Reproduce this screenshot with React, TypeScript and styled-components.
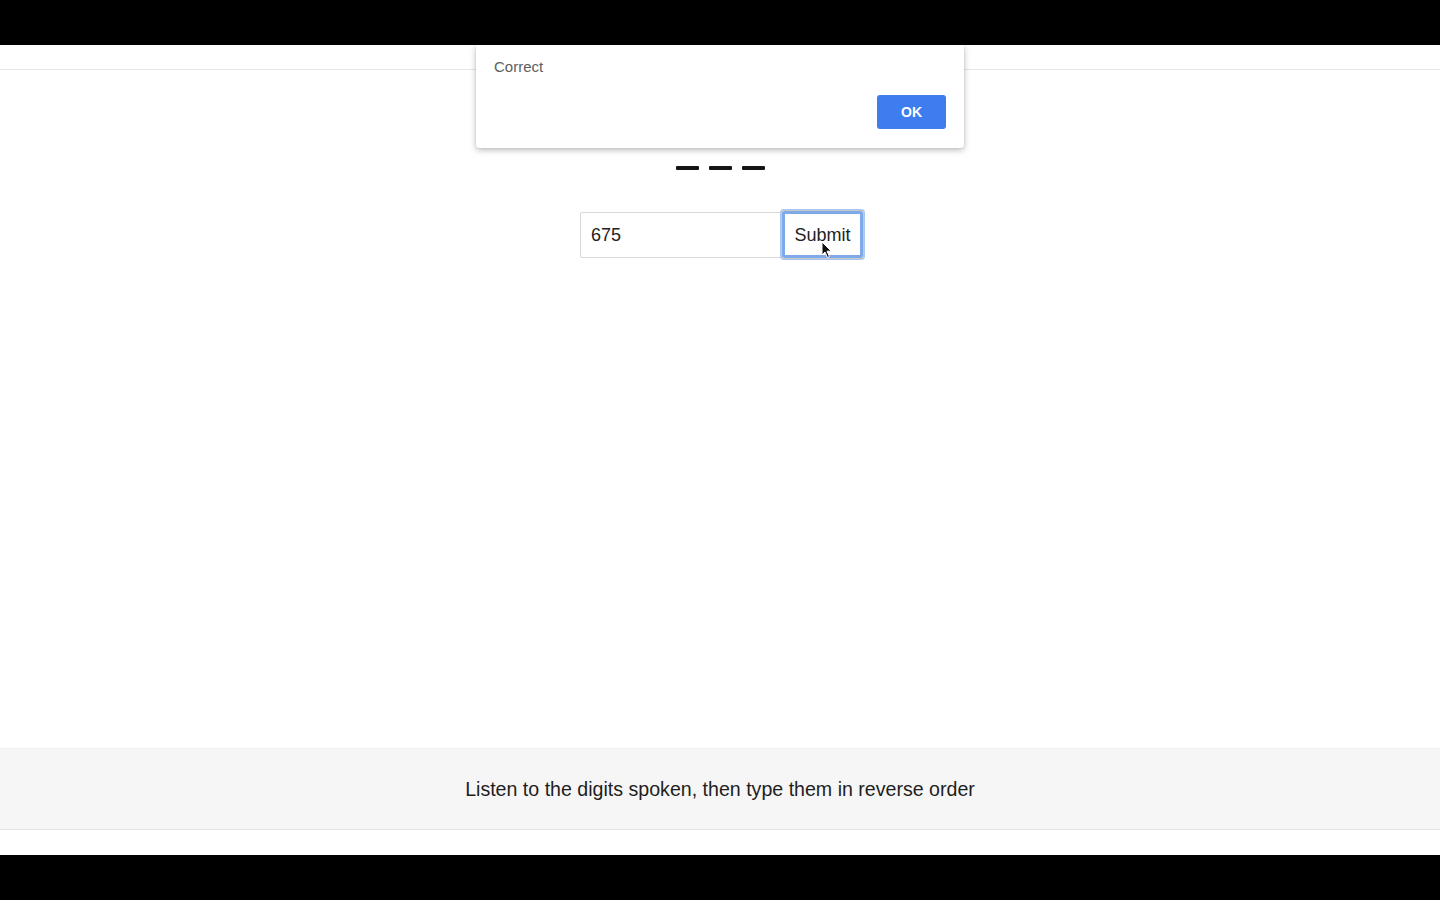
import React from "react";
import styled, { createGlobalStyle } from "styled-components";

const Global = createGlobalStyle`
  html, body { margin: 0; padding: 0; background: #000; }
  body { font-family: "Liberation Sans", Arial, sans-serif; }
  * { box-sizing: border-box; }
`;

const Frame = styled.div`
  width: 1440px;
  height: 900px;
  display: flex;
  flex-direction: column;
  background: #000;
  overflow: hidden;
`;

const Letterbox = styled.div`
  height: 45px;
  flex: none;
  background: #000;
`;

const Page = styled.div`
  position: relative;
  flex: 1;
  display: flex;
  flex-direction: column;
  background: #fff;
`;

const HeaderBar = styled.div`
  height: 25px;
  flex: none;
  border-bottom: 1px solid #e6e6e6;
`;

const Main = styled.main`
  flex: 1;
  display: flex;
  flex-direction: column;
  align-items: center;
  padding-top: 96px;
`;

const Blanks = styled.div`
  display: flex;
  gap: 10px;
  margin-left: 1px;
`;

const Blank = styled.span`
  width: 23px;
  height: 4px;
  border-radius: 1px;
  background: #151515;
`;

const Form = styled.form`
  display: flex;
  align-items: center;
  margin-top: 40px;
  margin-left: 4px;
`;

const Input = styled.input`
  width: 201px;
  height: 46px;
  border: 1px solid #d9d9d9;
  border-radius: 2px 0 0 2px;
  padding: 2px 10px 0;
  font-family: "Liberation Sans", Arial, sans-serif;
  font-size: 18px;
  color: #222;
  outline: none;
  background: #fff;
`;

const SubmitWrap = styled.div`
  position: relative;
`;

const SubmitButton = styled.button`
  width: 83px;
  height: 49px;
  border: 1px solid #c8c8c8;
  border-radius: 3px;
  background: #fff;
  font-family: "Liberation Sans", Arial, sans-serif;
  font-size: 18px;
  color: #222;
  padding: 2px 0 0;
  box-shadow: 0 0 0 3px #7eaaea inset, 0 0 0 1px #a9c6f2;
  outline: none;
`;

const Cursor = styled.svg`
  position: absolute;
  left: 40px;
  top: 31px;
  pointer-events: none;
`;

const Footer = styled.footer`
  height: 82px;
  flex: none;
  margin-bottom: 25px;
  background: #f6f6f6;
  border-top: 1px solid #efefef;
  border-bottom: 1px solid #e3e3e3;
  display: flex;
  align-items: center;
  justify-content: center;
  font-size: 19.6px;
  color: #1e1e1e;
`;

const Dialog = styled.div`
  position: absolute;
  left: 476px;
  top: 0;
  width: 488px;
  height: 103px;
  background: #fff;
  border-radius: 0 0 3px 3px;
  box-shadow: 0 2px 6px rgba(0, 0, 0, 0.28), 0 0 1px rgba(0, 0, 0, 0.2);
  display: flex;
  flex-direction: column;
  padding: 14px 18px 0 18px;
`;

const DialogText = styled.div`
  font-family: "Liberation Sans", Arial, sans-serif;
  font-size: 15px;
  color: #5e5e5e;
  line-height: 16px;
`;

const DialogActions = styled.div`
  display: flex;
  justify-content: flex-end;
  margin-top: 20px;
`;

const OkButton = styled.button`
  width: 69px;
  height: 34px;
  border: none;
  border-radius: 3px;
  background: #3d7df0;
  color: #fff;
  font-family: "Liberation Sans", Arial, sans-serif;
  font-weight: bold;
  font-size: 14px;
  padding: 0;
`;

export default function App() {
  return (
    <>
      <Global />
      <Frame>
        <Letterbox />
        <Page>
          <HeaderBar />
          <Main>
            <Blanks>
              <Blank />
              <Blank />
              <Blank />
            </Blanks>
            <Form onSubmit={(e) => e.preventDefault()}>
              <Input defaultValue="675" />
              <SubmitWrap>
                <SubmitButton type="submit">Submit</SubmitButton>
                <Cursor width="12" height="18" viewBox="0 0 12 18">
                  <path
                    d="M1 1 L1 14 L4 11 L6.5 16.5 L8.5 15.6 L6 10.2 L10.2 10.2 Z"
                    fill="#111"
                    stroke="#fff"
                    strokeWidth="1"
                    strokeLinejoin="round"
                  />
                </Cursor>
              </SubmitWrap>
            </Form>
          </Main>
          <Footer>Listen to the digits spoken, then type them in reverse order</Footer>
          <Dialog>
            <DialogText>Correct</DialogText>
            <DialogActions>
              <OkButton>OK</OkButton>
            </DialogActions>
          </Dialog>
        </Page>
        <Letterbox />
      </Frame>
    </>
  );
}
